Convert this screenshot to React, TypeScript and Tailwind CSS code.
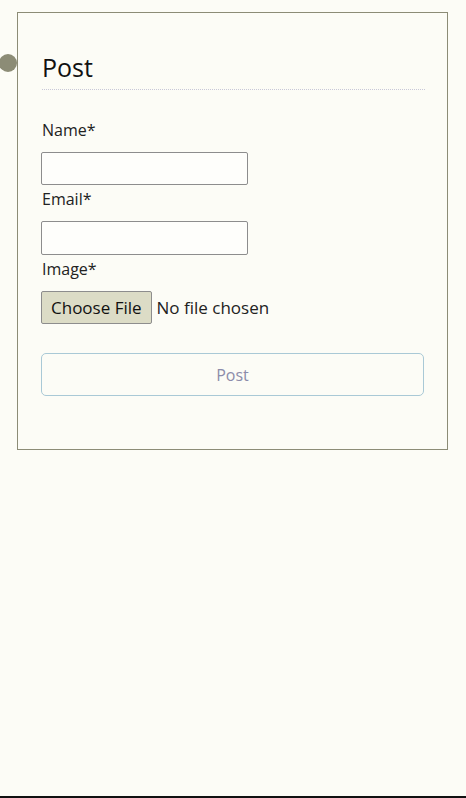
import React from "react";

const PostForm: React.FC = () => {
    return (
        <div className="relative pt-3 pl-[17px]">
            <span className="absolute left-[-1px] top-[54px] w-[18px] h-[18px] rounded-full bg-[#8c8c76]" />
            <div className="w-[431px] border border-[#8c8c76] pl-6 pr-[22px] pt-[38px] pb-[53px]">
                <h2 className="text-[25px] leading-8 text-[#111] pb-[6px] border-b border-dotted border-[#c8c8d8]">
                    Post
                </h2>
                <form className="flex flex-col mt-[28px]" onSubmit={(e) => e.preventDefault()}>
                    <label className="text-base leading-6 text-[#222]">Name*</label>
                    <input
                        type="text"
                        className="mt-[10px] -ml-px w-[207px] h-[33px] border border-[#8d8d8d] rounded-[2px] bg-white/60 px-2 outline-none"
                    />
                    <label className="text-base leading-6 text-[#222] mt-[2px]">Email*</label>
                    <input
                        type="email"
                        className="mt-[10px] -ml-px w-[207px] h-[34px] border border-[#8d8d8d] rounded-[2px] bg-white/60 px-2 outline-none"
                    />
                    <label className="text-base leading-6 text-[#222] mt-[2px]">Image*</label>
                    <div className="flex items-center mt-[10px] -ml-px text-[17px]">
                        <span className="h-[33px] px-[9px] flex items-center border border-[#8d8d8d] rounded-[2px] bg-[#dcdcc6] text-[#111]">
                            Choose File
                        </span>
                        <span className="ml-[5px] text-[#222]">No file chosen</span>
                    </div>
                    <button
                        type="submit"
                        className="mt-[29px] -ml-px h-[43px] w-full border border-[#a9c9d6] rounded-[5px] text-base text-[#8c8caa] bg-transparent"
                    >
                        Post
                    </button>
                </form>
            </div>
        </div>
    );
};

export default function App() {
    return (
        <div className="min-h-[798px] flex flex-col bg-[#fcfcf6] font-['Open_Sans','Noto_Sans',sans-serif]">
            <div className="flex-1">
                <PostForm />
            </div>
            <div className="h-[2px] bg-[#111]" />
        </div>
    );
}
